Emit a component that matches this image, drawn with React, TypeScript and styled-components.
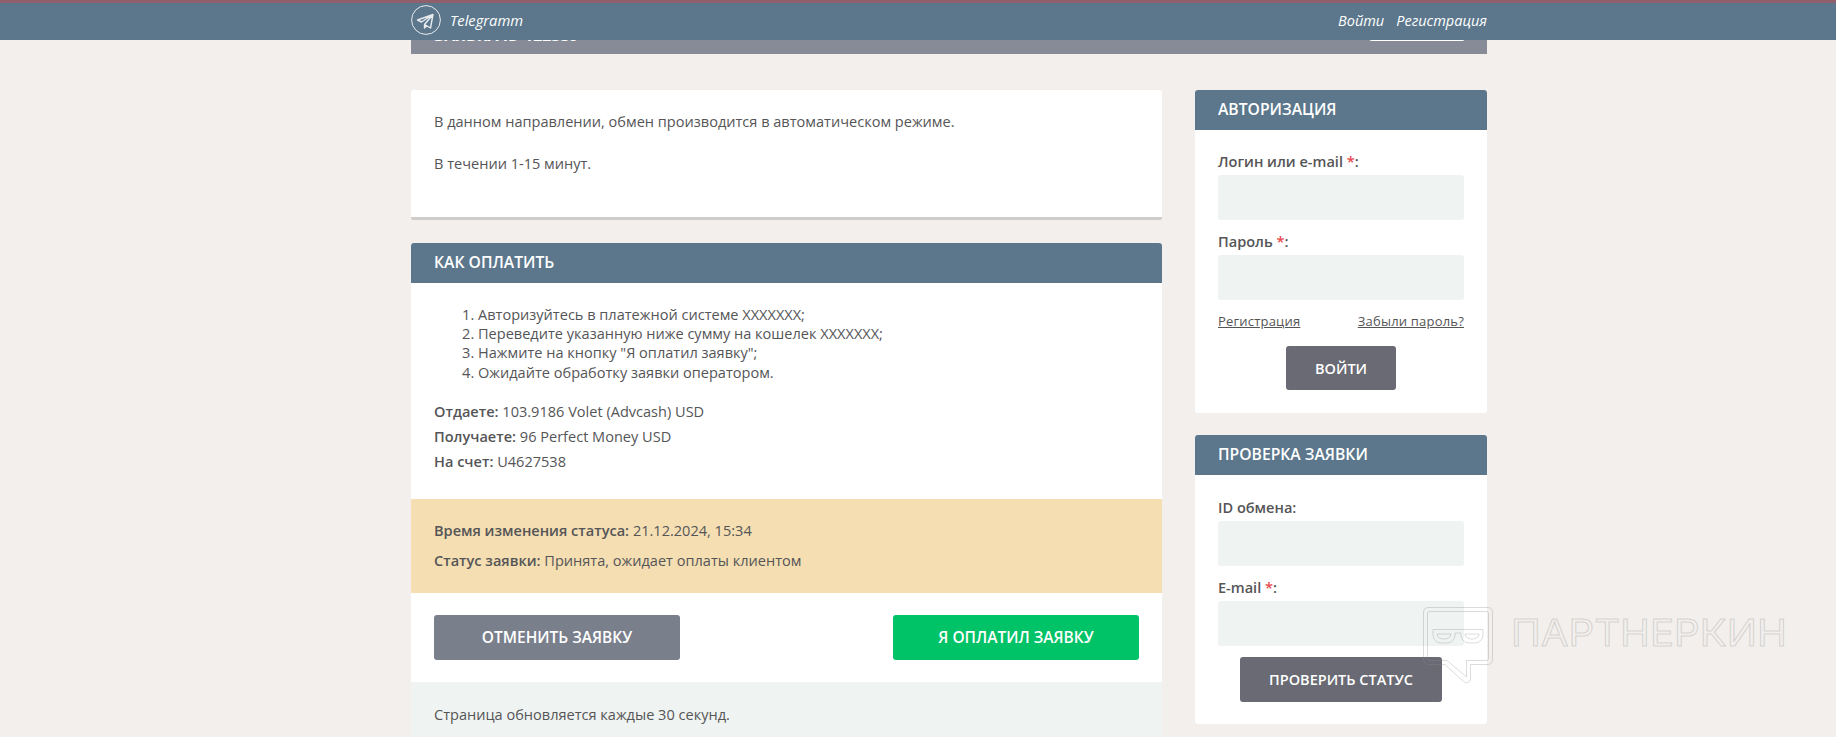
import React from "react";
import styled, { createGlobalStyle } from "styled-components";

const Global = createGlobalStyle`
  html, body { margin: 0; padding: 0; height: 737px; overflow: hidden; background: #f2efec; }
  body { font-family: "Open Sans", "Noto Sans", sans-serif; color: #555557; font-size: 14.55px; }
  b { font-weight: 600; }
  * { box-sizing: border-box; }
`;
const Page = styled.div`position: relative; width: 1836px; height: 737px; overflow: hidden;`;
const TopBar = styled.header`position: relative; z-index: 2; height: 40px; background: #5c778c; box-shadow: inset 0 3px 0 #8f5f6c;`;
const TopInner = styled.div`width: 1076px; height: 40px; margin-left: 411px; display: flex; align-items: center; justify-content: space-between;`;
const Brand = styled.div`display: flex; align-items: center; gap: 9px; color: #fff; font-style: italic; font-size: 14.7px;`;
const Links = styled.nav`display: flex; gap: 12px; color: #fff; font-style: italic; font-size: 14.5px;`;
const Wrap = styled.div`width: 1076px; margin-left: 411px;`;
const TitleBar = styled.div`height: 44px; margin-top: -30px; margin-bottom: 36px; padding: 0 22px 0 23px; background: #868b97; display: flex; justify-content: space-between; align-items: flex-start;`;
const TitleText = styled.h1`margin: 15px 0 0; color: #fff; font-size: 16px; font-weight: 700; line-height: 20px;`;
const TitleButton = styled.span`width: 96px; height: 31px; background: #fff; border-radius: 3px;`;
const Columns = styled.div`display: flex; justify-content: space-between; align-items: flex-start;`;
const Main = styled.main`width: 751px; display: flex; flex-direction: column; gap: 23px;`;
const Side = styled.aside`width: 292px; display: flex; flex-direction: column; gap: 22px;`;
const InfoCard = styled.section`background: #fff; border-radius: 3px 3px 2px 2px; border-bottom: 3px solid #cfcdcb; height: 130px; padding: 21px 23px; line-height: 21px;`;
const Para = styled.p`margin: 0 0 21px;`;
const Card = styled.section`background: #fff; border-radius: 3px;`;
const Head = styled.h2`margin: 0; height: 40px; background: #5c778c; color: #fff; font-size: 15.7px; font-weight: 600; line-height: 39px; padding: 0 23px; border-radius: 3px 3px 0 0;`;
const Steps = styled.ol`margin: 0; padding: 22px 0 0 67px; line-height: 19.2px;`;
const Details = styled.div`padding: 17px 23px 0; height: 117px; line-height: 25px;`;
const Status = styled.div`background: #f4deb2; height: 94px; padding: 16px 23px 0; line-height: 30px;`;
const Actions = styled.div`display: flex; justify-content: space-between; padding: 22px 23px; height: 89px;`;
const Big = styled.button<{ $green?: boolean }>`width: 246px; height: 45px; border: 0; border-radius: 3px; background: ${p => p.$green ? "#00c267" : "#7a7f8c"}; color: #fff; font: 600 15.5px "Open Sans", sans-serif;`;
const Footer = styled.div`background: #eff3f1; padding: 22px 23px; height: 70px; line-height: 21px;`;
const Form = styled.form<{ $top: number; $bottom: number }>`padding: ${p => p.$top}px 23px ${p => p.$bottom}px; display: flex; flex-direction: column;`;
const Label = styled.label`font-weight: 600; line-height: 23px; margin-bottom: 2px;`;
const Star = styled.span`color: #e9474d;`;
const Field = styled.div`height: 45px; background: #eff3f1; border-radius: 3px; margin-bottom: 10px;`;
const Row = styled.div`display: flex; justify-content: space-between; font-size: 13px; line-height: 20px; margin-top: 1px; letter-spacing: .2px;`;
const A = styled.a`color: #555557; text-decoration: underline;`;
const Small = styled.button<{ $w: number; $h: number; $mt: number }>`width: ${p => p.$w}px; height: ${p => p.$h}px; align-self: center; margin-top: ${p => p.$mt}px; border: 0; border-radius: 3px; background: #696a73; color: #fff; font: 600 14.5px "Open Sans", sans-serif;`;
const Mark = styled.div`position: absolute; left: 1423px; top: 607px; display: flex; align-items: flex-start; gap: 18px;`;
const MarkText = styled.span`margin-top: 4px; font: 400 37px/44px "Inter", sans-serif; color: transparent; -webkit-text-stroke: 1px rgba(140,140,140,.3); transform: scaleX(1.085); transform-origin: left center;`;

const Plane = () => (
  <svg width="30" height="30" viewBox="0 0 30 30" fill="none" stroke="#fff">
    <circle cx="15" cy="15" r="14.4" strokeWidth="1" opacity=".85" />
    <path d="M6.5 15 22 9.500l-2.500 13.500-6-3.500L22 9.500 10.500 17l-4-2ZM13.500 19.500v3.500l2-2.200" strokeWidth="1.4" strokeLinejoin="round" opacity=".85" />
  </svg>
);
const MarkIcon = () => (
  <svg width="70" height="77" viewBox="0 0 70 77" fill="none" stroke="rgba(140,140,140,.3)">
    <path d="M5 .5h60a4.500 4.500 0 0 1 4.500 4.500v48a4.500 4.500 0 0 1-4.500 4.500H47.500V72a4 4 0 0 1-7 2.500L22 57.500H5A4.500 4.500 0 0 1 .5 53V5A4.500 4.500 0 0 1 5 .5Z" />
    <path d="M6.500 4.500h57a2 2 0 0 1 2 2v45a2 2 0 0 1-2 2H43.500V70L24 53.500H6.500a2 2 0 0 1-2-2v-45a2 2 0 0 1 2-2Z" />
    <path d="M10 22.500h50V28a8 8 0 0 1-8 8h-6a8 8 0 0 1-8-8v-2h-6v2a8 8 0 0 1-8 8h-6a8 8 0 0 1-8-8Z" />
    <path d="M14 27h14c0 3-3 5-7 5s-7-2-7-5ZM42 27h14c0 3-3 5-7 5s-7-2-7-5Z" />
  </svg>
);

export default function App() {
  return (
    <Page>
      <Global />
      <TopBar>
        <TopInner>
          <Brand><Plane />Telegramm</Brand>
          <Links><span>Войти</span><span>Регистрация</span></Links>
        </TopInner>
      </TopBar>
      <Wrap>
        <TitleBar><TitleText>ЗАЯВКА ID 122339</TitleText><TitleButton /></TitleBar>
        <Columns>
          <Main>
            <InfoCard>
              <Para>В данном направлении, обмен производится в автоматическом режиме.</Para>
              <Para>В течении 1-15 минут.</Para>
            </InfoCard>
            <Card>
              <Head>КАК ОПЛАТИТЬ</Head>
              <Steps>
                <li>Авторизуйтесь в платежной системе XXXXXXX;</li>
                <li>Переведите указанную ниже сумму на кошелек XXXXXXX;</li>
                <li>Нажмите на кнопку "Я оплатил заявку";</li>
                <li>Ожидайте обработку заявки оператором.</li>
              </Steps>
              <Details>
                <div><b>Отдаете:</b> 103.9186 Volet (Advcash) USD</div>
                <div><b>Получаете:</b> 96 Perfect Money USD</div>
                <div><b>На счет:</b> U4627538</div>
              </Details>
              <Status>
                <div><b>Время изменения статуса:</b> 21.12.2024, 15:34</div>
                <div><b>Статус заявки:</b> Принята, ожидает оплаты клиентом</div>
              </Status>
              <Actions><Big>ОТМЕНИТЬ ЗАЯВКУ</Big><Big $green>Я ОПЛАТИЛ ЗАЯВКУ</Big></Actions>
              <Footer>Страница обновляется каждые 30 секунд.</Footer>
            </Card>
          </Main>
          <Side>
            <Card>
              <Head>АВТОРИЗАЦИЯ</Head>
              <Form $top={20} $bottom={23}>
                <Label>Логин или e-mail <Star>*</Star>:</Label>
                <Field />
                <Label>Пароль <Star>*</Star>:</Label>
                <Field />
                <Row><A>Регистрация</A><A>Забыли пароль?</A></Row>
                <Small $w={110} $h={44} $mt={15}>ВОЙТИ</Small>
              </Form>
            </Card>
            <Card>
              <Head>ПРОВЕРКА ЗАЯВКИ</Head>
              <Form $top={21} $bottom={22}>
                <Label>ID обмена:</Label>
                <Field />
                <Label>E-mail <Star>*</Star>:</Label>
                <Field />
                <Small $w={202} $h={45} $mt={1}>ПРОВЕРИТЬ СТАТУС</Small>
              </Form>
            </Card>
          </Side>
        </Columns>
      </Wrap>
      <Mark><MarkIcon /><MarkText>ПАРТНЕРКИН</MarkText></Mark>
    </Page>
  );
}
